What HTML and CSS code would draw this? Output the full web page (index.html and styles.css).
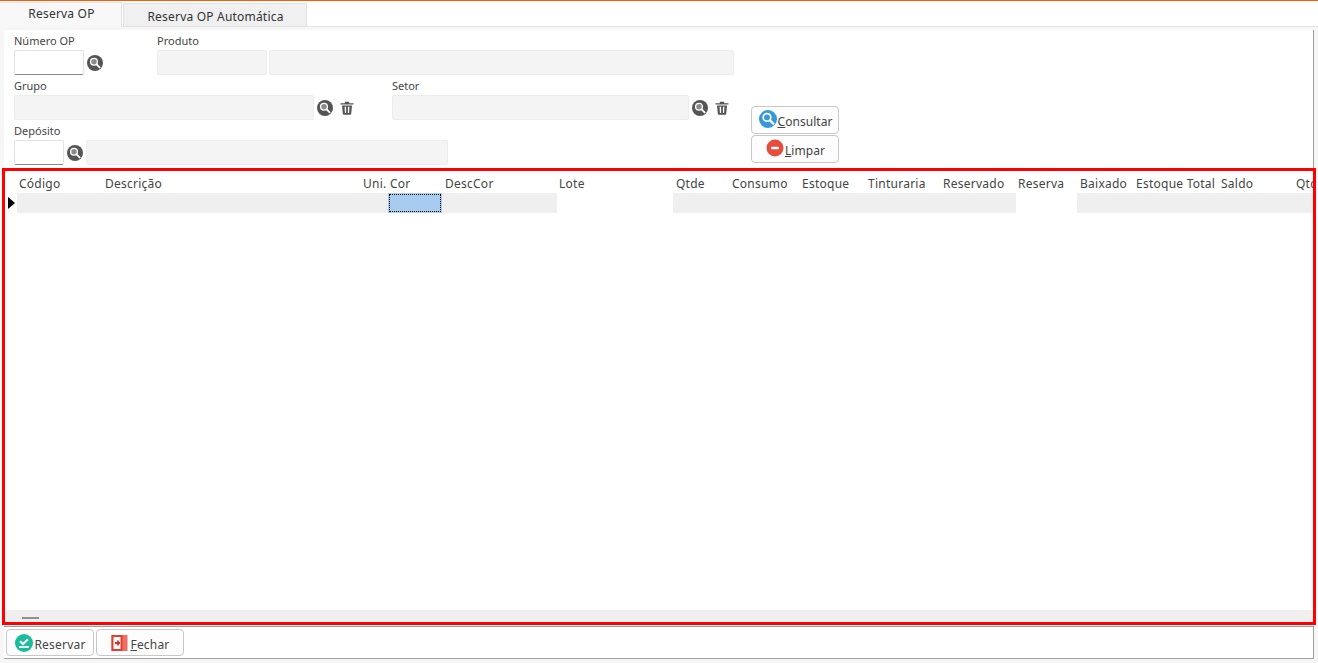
FILE: index.html
```html
<!DOCTYPE html>
<html lang="pt-BR">
<head>
    <meta charset="UTF-8">
    <title>Reserva OP</title>
    <link rel="stylesheet" href="styles.css">
</head>
<body>
    <svg class="icon-defs" width="0" height="0">
        <symbol id="i-search" viewBox="0 0 16 16">
            <circle cx="8" cy="8" r="8" fill="#555"/>
            <circle cx="7" cy="6.8" r="3.4" fill="#8a8a8a" stroke="#fff" stroke-width="1.3"/>
            <path d="M9.6 9.4l3 3" stroke="#fff" stroke-width="1.9" stroke-linecap="round"/>
        </symbol>
        <symbol id="i-trash" viewBox="0 0 14 14">
            <path d="M0.5 2.2h13v1.4H0.5zM4.8 0.8h4.4v1.6H4.8z" fill="#555"/>
            <path d="M2 4.4h10l-.8 8.4q-.1 1-1 1H3.8q-.9 0-1-1zM4.6 5.8l.3 6.2h1.2V5.8zm3.3 0V12h1.2l.3-6.2z" fill="#555" fill-rule="evenodd"/>
        </symbol>
    </svg>

    <div class="tabs">
        <div class="tab active">Reserva OP</div>
        <div class="tab">Reserva OP Automática</div>
    </div>

    <div class="page">
        <div class="filters">
            <div class="filter-rows">
                <div class="filter-row">
                    <div class="field">
                        <label>Número OP</label>
                        <div class="field-line">
                            <div class="input w-70"></div>
                            <svg class="ic-search"><use href="#i-search"/></svg>
                        </div>
                    </div>
                    <div class="field produto">
                        <label>Produto</label>
                        <div class="field-line">
                            <div class="input off w-110"></div>
                            <div class="input off w-465"></div>
                        </div>
                    </div>
                </div>
                <div class="filter-row">
                    <div class="field">
                        <label>Grupo</label>
                        <div class="field-line">
                            <div class="input off w-300"></div>
                            <svg class="ic-search"><use href="#i-search"/></svg>
                            <svg class="ic-trash"><use href="#i-trash"/></svg>
                        </div>
                    </div>
                    <div class="field setor">
                        <label>Setor</label>
                        <div class="field-line">
                            <div class="input off w-297"></div>
                            <svg class="ic-search"><use href="#i-search"/></svg>
                            <svg class="ic-trash"><use href="#i-trash"/></svg>
                        </div>
                    </div>
                </div>
                <div class="filter-row">
                    <div class="field">
                        <label>Depósito</label>
                        <div class="field-line">
                            <div class="input w-50"></div>
                            <svg class="ic-search"><use href="#i-search"/></svg>
                            <div class="input off w-362 after-icon"></div>
                        </div>
                    </div>
                </div>
            </div>
            <div class="filter-actions">
                <button class="btn btn-tall">
                    <svg class="btn-icon" viewBox="0 0 18 18">
                        <circle cx="9" cy="9" r="9" fill="#3498db"/>
                        <circle cx="8" cy="7.4" r="3.8" fill="none" stroke="#fff" stroke-width="1.7"/>
                        <path d="M11 10.4l3.4 3.4" stroke="#fff" stroke-width="2.3" stroke-linecap="round"/>
                    </svg>
                    <span><u>C</u>onsultar</span>
                </button>
                <button class="btn btn-tall">
                    <svg class="btn-icon" viewBox="0 0 18 18">
                        <circle cx="9" cy="9" r="8.5" fill="#e74c3c"/>
                        <rect x="5" y="7.8" width="8" height="2.5" rx="1" fill="#fff"/>
                    </svg>
                    <span><u>L</u>impar</span>
                </button>
            </div>
        </div>

        <div class="grid-frame">
            <div class="grid-head">
                <div class="col c-codigo">Código</div>
                <div class="col c-desc">Descrição</div>
                <div class="col c-uni">Uni.</div>
                <div class="col c-cor">Cor</div>
                <div class="col c-desccor">DescCor</div>
                <div class="col c-lote">Lote</div>
                <div class="col c-qtde">Qtde</div>
                <div class="col c-consumo">Consumo</div>
                <div class="col c-estoque">Estoque</div>
                <div class="col c-tint">Tinturaria</div>
                <div class="col c-reservado">Reservado</div>
                <div class="col c-reserva">Reserva</div>
                <div class="col c-baixado">Baixado</div>
                <div class="col c-total">Estoque Total</div>
                <div class="col c-saldo">Saldo</div>
                <div class="col c-qtde2">Qtde</div>
            </div>
            <div class="grid-row">
                <div class="row-mark"></div>
                <div class="cell c-codigo"></div>
                <div class="cell c-desc"></div>
                <div class="cell c-uni"></div>
                <div class="cell c-cor current"></div>
                <div class="cell c-desccor"></div>
                <div class="cell c-lote edit"></div>
                <div class="cell c-qtde"></div>
                <div class="cell c-consumo"></div>
                <div class="cell c-estoque"></div>
                <div class="cell c-tint"></div>
                <div class="cell c-reservado"></div>
                <div class="cell c-reserva edit"></div>
                <div class="cell c-baixado"></div>
                <div class="cell c-total"></div>
                <div class="cell c-saldo"></div>
                <div class="cell c-qtde2"></div>
            </div>
            <div class="grid-body"></div>
            <div class="grid-scroll"><div class="scroll-thumb"></div></div>
        </div>

        <div class="footer">
            <button class="btn btn-foot w-reservar">
                <svg class="btn-icon" viewBox="0 0 18 18">
                    <circle cx="9" cy="9" r="9" fill="#1abc9c"/>
                    <path d="M5 7.2l3 2.8 5-4.8" fill="none" stroke="#fff" stroke-width="2"/>
                    <rect x="4" y="12" width="10" height="1.8" fill="#fff"/>
                </svg>
                <span>Reservar</span>
            </button>
            <button class="btn btn-foot w-fechar">
                <svg class="btn-icon" viewBox="0 0 18 18">
                    <rect x="0.5" y="1" width="16" height="16" fill="#ec7063"/>
                    <rect x="0.5" y="1" width="11" height="16" fill="#e53e30"/>
                    <rect x="2.5" y="3" width="7" height="12" fill="#fff"/>
                    <path d="M4 9h5M7 6.5v5" stroke="#d9302a" stroke-width="1.8"/>
                </svg>
                <span><u>F</u>echar</span>
            </button>
        </div>
    </div>
</body>
</html>
```

FILE: styles.css
```css
* {
    box-sizing: border-box;
}

html, body {
    margin: 0;
    height: 663px;
    overflow: hidden;
}

body {
    background: #fff;
    color: #444;
    font-family: "Noto Sans", "Open Sans", sans-serif;
    font-size: 12px;
    letter-spacing: 0.25px;
    border-top: 1px solid #ff5a00;
}

.icon-defs {
    position: absolute;
}

/* Abas */
.tabs {
    display: flex;
    align-items: flex-end;
    height: 26px;
    border-bottom: 1px solid #e2e2e2;
}

.tab {
    width: 184px;
    height: 23px;
    margin-left: 1px;
    padding: 4px 0 0 1px;
    text-align: center;
    color: #333;
    background: #f0f0f0;
    border: 1px solid #e2e2e2;
    border-bottom: none;
    letter-spacing: 0.2px;
}

.tab.active {
    width: 122px;
    height: 25px;
    margin: 0 0 -1px;
    padding: 2px 0 0 2px;
    background: #f8f8f8;
    border-left: none;
}

/* Filtros */
.page {
    height: 636px;
    padding-top: 3px;
    background: #f6f6f6;
}

.filters {
    display: flex;
    height: 138px;
    margin: 0 4px;
    padding-left: 10px;
    background: #fff;
    border-right: 1px solid #a0a0a0;
}

.filter-rows {
    width: 737px;
}

.filter-row {
    display: flex;
    height: 45px;
}

.field label {
    display: block;
    height: 20px;
    padding-top: 3px;
    font-size: 11px;
    line-height: 16px;
    letter-spacing: 0;
}

.field-line {
    display: flex;
    align-items: center;
    gap: 2px;
}

.produto {
    margin-left: 54px;
}

.setor {
    margin-left: 38px;
}

.input {
    height: 25px;
    background: #fff;
    border: 1px solid #e2e2e2;
    border-bottom-color: #8a8a8a;
    border-radius: 2px;
}

.input.off {
    background: #f4f4f4;
    border-color: #ececec;
}

.w-50 { width: 50px; }
.w-70 { width: 70px; }
.w-110 { width: 110px; }
.w-297 { width: 297px; }
.w-300 { width: 300px; }
.w-362 { width: 362px; }
.w-465 { width: 465px; }

.after-icon {
    margin-left: 1px;
}

.ic-search {
    width: 16px;
    height: 16px;
    margin-left: 1px;
}

.ic-trash {
    width: 14px;
    height: 14px;
    margin-left: 5px;
}

.filter-actions {
    display: flex;
    flex-direction: column;
    gap: 1px;
    padding-top: 76px;
}

/* Botoes */
.btn {
    display: flex;
    align-items: center;
    justify-content: center;
    gap: 1px;
    padding: 0 0 0 1px;
    color: #444;
    background: #fdfdfd;
    border: 1px solid #c8c8c8;
    border-radius: 4px;
    font-family: inherit;
    font-size: 12px;
    letter-spacing: 0.05px;
}

.btn-tall {
    width: 88px;
    height: 28px;
}

.btn-icon {
    width: 18px;
    height: 18px;
    margin-top: -2px;
}

.btn span {
    padding-top: 2px;
}

/* Grade */
.grid-frame {
    display: flex;
    flex-direction: column;
    height: 457px;
    margin: 0 2px;
    padding-left: 12px;
    background: #fff;
    border: 3px solid #f00;
    overflow: hidden;
}

.grid-head, .grid-row {
    display: flex;
    flex: none;
    width: 1340px;
}

.grid-head {
    height: 22px;
    padding-top: 3px;
    line-height: 20px;
}

.col {
    padding-left: 2px;
    white-space: nowrap;
}

.col.c-desccor, .col.c-qtde, .col.c-baixado {
    padding-left: 3px;
}

.grid-row {
    position: relative;
    height: 20px;
}

.row-mark {
    position: absolute;
    left: -9px;
    top: 4px;
    border-left: 7px solid #000;
    border-top: 6px solid transparent;
    border-bottom: 6px solid transparent;
}

.cell {
    background: #efefef;
}

.cell.edit {
    background: #fff;
}

.cell.current {
    background: #a8ccf0;
    outline: 1px dotted #000;
    outline-offset: -2px;
}

.c-codigo { width: 86px; }
.c-desc { width: 258px; }
.c-uni { width: 27px; }
.c-cor { width: 54px; }
.c-desccor { width: 115px; }
.c-lote { width: 116px; }
.c-qtde { width: 57px; }
.c-consumo { width: 70px; }
.c-estoque { width: 66px; }
.c-tint { width: 75px; }
.c-reservado { width: 75px; }
.c-reserva { width: 61px; }
.c-baixado { width: 57px; }
.c-total { width: 85px; }
.c-saldo { width: 75px; }
.c-qtde2 { width: 60px; }

.grid-body {
    flex: 1;
}

.grid-scroll {
    flex: none;
    height: 12px;
    margin-left: -12px;
    padding: 7px 0 0 17px;
    background: #efefef;
}

.scroll-thumb {
    width: 17px;
    height: 2px;
    background: #909090;
}

/* Rodape */
.footer {
    display: flex;
    gap: 2px;
    height: 33px;
    margin: 1px 4px 0;
    padding: 2px 0 0 2px;
    background: #fff;
    border-top: 1px solid #a0a0a0;
    border-right: 1px solid #a0a0a0;
    border-bottom: 1px solid #a0a0a0;
}

.btn-foot {
    height: 27px;
    letter-spacing: 0.2px;
}

.btn-foot .btn-icon {
    margin-top: 0;
}

.btn-foot span {
    padding-top: 3px;
}

.w-reservar { width: 88px; }
.w-fechar { width: 88px; }
```
